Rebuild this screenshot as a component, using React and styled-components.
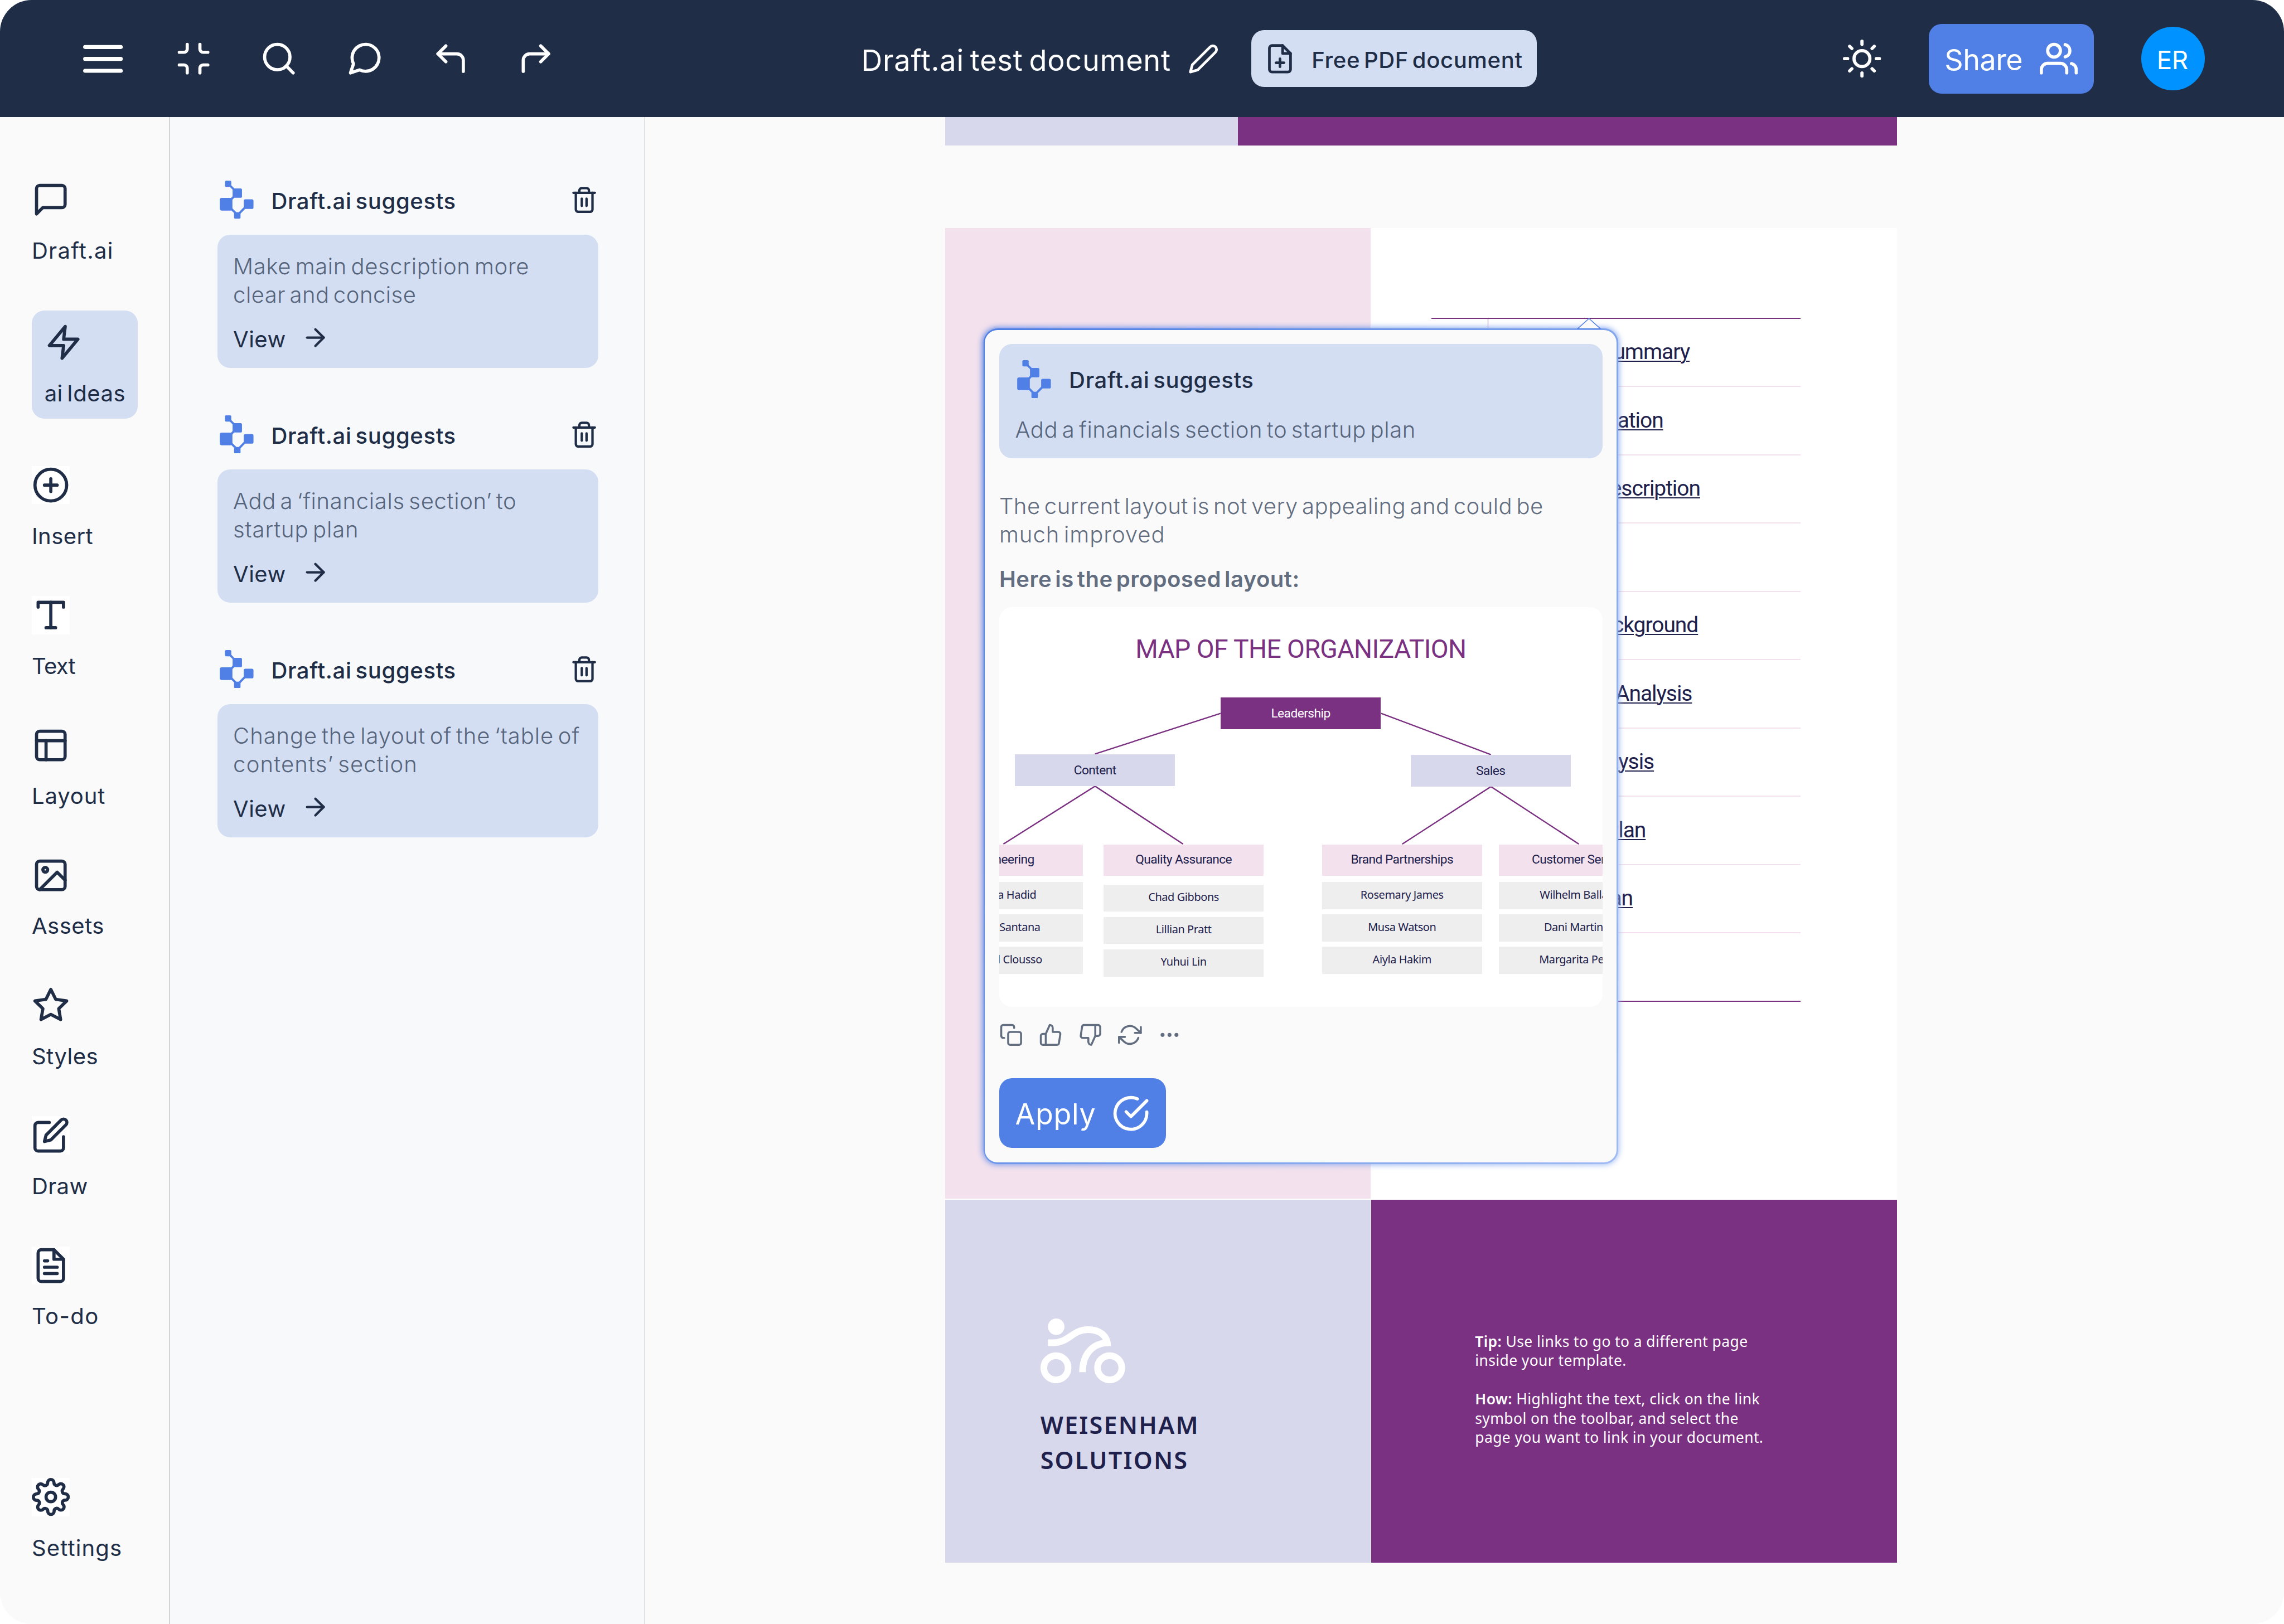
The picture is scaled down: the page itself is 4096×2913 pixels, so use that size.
import React from 'react';
import styled, { createGlobalStyle, css } from 'styled-components';
import {
    FiArrowRight, FiCheckCircle, FiCopy, FiCornerUpLeft, FiCornerUpRight, FiEdit, FiEdit2,
    FiFilePlus, FiFileText, FiImage, FiLayout, FiMenu, FiMessageCircle, FiMessageSquare,
    FiMinimize, FiMoreHorizontal, FiPlusCircle, FiRefreshCw, FiSearch, FiSettings, FiStar,
    FiSun, FiThumbsDown, FiThumbsUp, FiTrash2, FiType, FiUsers, FiZap,
} from 'react-icons/fi';

const navy = '#202d47';
const slate = '#56657c';
const gray = '#626d80';
const blue = '#507fe6';
const sky = '#d3def2';
const purple = '#7b3182';
const lavender = '#d7d8eb';
const pink = '#f3e1ed';
const ink = '#20204c';

// 1rem is one unit of the 1440 x 1024 layout
const GlobalStyle = createGlobalStyle`
    html {
        font-size: calc(100vw / 1440);
        background: #fff;
    }
    body {
        margin: 0;
    }
    * {
        box-sizing: border-box;
    }
    p {
        margin: 0;
    }
    svg {
        display: block;
        flex: none;
    }
`

const tools = [FiMinimize, FiSearch, FiMessageCircle, FiCornerUpLeft, FiCornerUpRight];

const navItems = [
    { label: 'Draft.ai', icon: FiMessageSquare, track: 0.031 },
    { label: 'ai Ideas', icon: FiZap, track: 0.0115, active: true },
    { label: 'Insert', icon: FiPlusCircle, track: 0.01, plate: true },
    { label: 'Text', icon: FiType, track: -0.018, plate: true },
    { label: 'Layout', icon: FiLayout, track: 0.021 },
    { label: 'Assets', icon: FiImage, track: 0.012 },
    { label: 'Styles', icon: FiStar, track: 0.011 },
    { label: 'Draw', icon: FiEdit, track: 0.008, plate: true },
    { label: 'To-do', icon: FiFileText, track: 0.035, plate: true },
    { label: 'Settings', icon: FiSettings, track: 0.028, plate: true, last: true },
];

const suggestions = [
    [['Make main description more', 0.015], ['clear and concise', 0.011]],
    [['Add a ‘financials section’ to', 0.016], ['startup plan', 0.02]],
    [['Change the layout of the ‘table of', 0.022], ['contents’ section', 0.0275]],
];

const contents = [
    { title: 'Executive Summary', width: 126.9 },
    { title: 'Presentation', width: 110.2 },
    { title: 'Business Description', width: 133.5 },
    {},
    { title: 'Business Background', width: 132.2 },
    { title: 'Market Analysis', width: 128.4 },
    { title: 'SWOT Analysis', width: 104.4 },
    { title: 'Marketing Plan', width: 99.2 },
    { title: 'Plan', width: 91 },
    {},
];

const teams = [
    { name: 'Engineering', x: -48.3, y: 173.2, people: ['Amelia Hadid', 'Carlos Santana', 'Mitchel Clousso'] },
    { name: 'Quality Assurance', x: 65.7, y: 174.8, people: ['Chad Gibbons', 'Lillian Pratt', 'Yuhui Lin'] },
    { name: 'Brand Partnerships', x: 203.4, y: 173.2, people: ['Rosemary James', 'Musa Watson', 'Aiyla Hakim'] },
    { name: 'Customer Service', x: 315, y: 173.2, people: ['Wilhelm Ballard', 'Dani Martinez', 'Margarita Perez'] },
];

const DraftLogo = () => (
    <LogoSvg viewBox="0 0 24 24">
        <path d="M8 3.2l2.6 2.6M10.4 10L8.6 11.9M8.6 17.6l3 3M17.2 17.1l-3.6 3.7" stroke={blue} strokeWidth="1.35" />
        <rect x="4.73" y="0" width="3.98" height="3.96" rx="0.8" />
        <rect x="9.53" y="4.88" width="5.92" height="5.92" rx="0.9" />
        <rect x="1.47" y="10.9" width="7.96" height="7.96" rx="1.2" />
        <rect x="16.57" y="11.8" width="6.13" height="6.04" rx="1" />
        <rect x="10.45" y="19.98" width="4.08" height="3.98" rx="0.7" />
    </LogoSvg>
);

const BikeLogo = () => (
    <BikeSvg viewBox="0 0 53.4 40.9">
        <g fill="none" stroke="#fff" strokeWidth="4.2">
            <circle cx="9.75" cy="31.1" r="7.65" />
            <circle cx="43.6" cy="31.1" r="7.65" />
            <path d="M4.7 15.3H8C18 15.3 20 7 30 7c7.5 0 12.3 4 12.3 10.4" />
            <path d="M26.5 33.8c0-11.5 6.5-18.4 16.5-18.5" />
        </g>
        <circle cx="9.9" cy="5.2" r="5.2" fill="#fff" />
    </BikeSvg>
);

const Suggestion = ({ lines }) => (
    <div>
        <SuggestionHead>
            <DraftLogo />
            <SuggestionTitle>Draft.ai suggests</SuggestionTitle>
            <FiTrash2 size="18rem" />
        </SuggestionHead>
        <SuggestionCard>
            <div>
                {lines.map(([text, track]) => (
                    <Line key={text} $color={slate} $track={track}>{text}</Line>
                ))}
            </div>
            <ViewLink>
                <Line $weight={400} $track={0.011}>View</Line>
                <FiArrowRight size="18rem" />
            </ViewLink>
        </SuggestionCard>
    </div>
);

const OrgChart = () => (
    <Chart>
        <ChartTitle>MAP OF THE ORGANIZATION</ChartTitle>
        <ChartLines viewBox="0 0 380 252">
            <path d="M139.5 67L60.4 92.6M240.8 67L310 93M2.6 149.4l57.8-36.5 55.5 36.5M254.1 149.4l55.9-36.2 55.4 36.2" />
        </ChartLines>
        <Node $x={139.5} $y={56.9} $bg={purple} $color="#fff">Leadership</Node>
        <Node $x={9.8} $y={92.7} $bg={lavender}>Content</Node>
        <Node $x={259.3} $y={93.2} $bg={lavender}>Sales</Node>
        {teams.map((team) => (
            <React.Fragment key={team.name}>
                <Node $x={team.x} $y={149.5} $bg={pink} $lift={1.2}>{team.name}</Node>
                {team.people.map((person, i) => (
                    <Person key={person} $x={team.x} $y={team.y + i * 20.4}>{person}</Person>
                ))}
            </React.Fragment>
        ))}
    </Chart>
);

const Popup = () => (
    <PopupFrame>
        <PopupArrow viewBox="0 0 15.2 7.2">
            <path d="M.4 6.9L7.6.4l7.2 6.5z" fill="#fafafa" stroke={blue} strokeWidth="0.5" />
        </PopupArrow>
        <PopupBody>
            <PopupCard>
                <SuggestionHead>
                    <DraftLogo />
                    <SuggestionTitle>Draft.ai suggests</SuggestionTitle>
                </SuggestionHead>
                <Line $color={slate} $track={0.0155}>Add a financials section to startup plan</Line>
            </PopupCard>
            <PopupText>
                <div>
                    <Line $color={gray} $track={0.0105}>The current layout is not very appealing and could be</Line>
                    <Line $color={gray} $track={0.023}>much improved</Line>
                </div>
                <Line $color={gray} $weight={600} $track={0.011}>Here is the proposed layout:</Line>
            </PopupText>
            <OrgChart />
            <Reactions>
                <FiCopy />
                <FiThumbsUp />
                <FiThumbsDown />
                <FiRefreshCw />
                <FiMoreHorizontal />
            </Reactions>
            <BlueButton $width={105} $track={0.012}>
                <span>Apply</span>
                <FiCheckCircle size="24rem" />
            </BlueButton>
        </PopupBody>
    </PopupFrame>
);

export default function App() {
    return (
        <>
            <GlobalStyle />
            <Screen>
                <Header>
                    <Tools>
                        <FiMenu size="30rem" />
                        {tools.map((Icon, i) => <Icon key={i} size="24rem" />)}
                    </Tools>
                    <DocTitle>
                        <h1>Draft.ai test document</h1>
                        <FiEdit2 size="20rem" />
                    </DocTitle>
                    <PdfButton>
                        <FiFilePlus size="20rem" />
                        <span>Free PDF document</span>
                    </PdfButton>
                    <Account>
                        <FiSun size="24rem" />
                        <BlueButton $width={104} $track={-0.01}>
                            <span>Share</span>
                            <FiUsers size="24rem" />
                        </BlueButton>
                        <Avatar>ER</Avatar>
                    </Account>
                </Header>
                <Main>
                    <Rail>
                        {navItems.map(({ label, icon: Icon, track, active, plate, last }) => (
                            <NavItem key={label} $active={active} $last={last}>
                                <IconPlate $plate={plate}><Icon size="24rem" /></IconPlate>
                                <Line $weight={400} $track={track}>{label}</Line>
                            </NavItem>
                        ))}
                    </Rail>
                    <Panel>
                        {suggestions.map((lines, i) => <Suggestion key={i} lines={lines} />)}
                    </Panel>
                    <Canvas>
                        <PreviousPage />
                        <DocPage>
                            <PinkCell />
                            <ContentsCell>
                                {contents.map(({ title, width }, i) => (
                                    <ContentsRow key={i} $first={i === 0} $last={i === contents.length - 1}>
                                        <NumberCell />
                                        {title && <ContentsLink $width={width}>{title}</ContentsLink>}
                                    </ContentsRow>
                                ))}
                            </ContentsCell>
                            <BrandCell>
                                <BikeLogo />
                                <BrandName>WEISENHAM<br />SOLUTIONS</BrandName>
                            </BrandCell>
                            <TipCell>
                                <p><b>Tip:</b> Use links to go to a different page<br />inside your template.</p>
                                <p><b>How:</b> Highlight the text, click on the link<br />symbol on the toolbar, and select the<br />page you want to link in your document.</p>
                            </TipCell>
                        </DocPage>
                        <Popup />
                    </Canvas>
                </Main>
            </Screen>
        </>
    );
}

const Screen = styled.div`
    display: flex;
    flex-direction: column;
    width: 100vw;
    height: 100vh;
    overflow: hidden;
    border-radius: 20rem;
    background: #fafafa;
    color: ${navy};
    font-family: Inter, "Open Sans", sans-serif;
    font-size: 14.1rem;
    line-height: 18rem;
    word-spacing: -0.11em;
    white-space: nowrap;
`

const Header = styled.header`
    flex: none;
    display: flex;
    align-items: center;
    height: 74rem;
    padding: 0 50rem;
    background: ${navy};
    color: #fff;
`

const Tools = styled.div`
    display: flex;
    align-items: center;
    gap: 30rem;
    margin-right: 193rem;
`

const DocTitle = styled.div`
    display: flex;
    align-items: center;
    justify-content: space-between;
    width: 226rem;
    margin-right: 20rem;

    h1 {
        margin: 0;
        padding-top: 1.7rem;
        font-size: 18.4rem;
        font-weight: 400;
        line-height: 24rem;
        letter-spacing: 0.0135em;
    }
`

const PdfButton = styled.button`
    display: flex;
    align-items: center;
    gap: 10rem;
    width: 180rem;
    height: 36rem;
    padding: 0 8rem;
    border: 0;
    border-radius: 8rem;
    background: ${sky};
    color: ${navy};
    font: inherit;
    font-weight: 500;
    letter-spacing: 0.0145em;
    word-spacing: inherit;

    span {
        padding-top: 1.7rem;
    }
`

const Account = styled.div`
    display: flex;
    align-items: center;
    gap: 30rem;
    margin-left: auto;
`

const BlueButton = styled.button`
    display: flex;
    align-items: center;
    justify-content: space-between;
    width: ${(props) => props.$width}rem;
    height: 44rem;
    padding: 0 10rem;
    border: 0;
    border-radius: 8rem;
    background: ${blue};
    color: #fff;
    font: inherit;
    font-size: 18.3rem;
    line-height: 24rem;
    letter-spacing: ${(props) => props.$track}em;

    span {
        padding-top: 1.7rem;
    }
`

const Avatar = styled.div`
    display: flex;
    align-items: center;
    justify-content: center;
    width: 40rem;
    height: 40rem;
    padding: 2rem 0.8rem 0 0;
    border-radius: 50%;
    background: #0093ff;
    font-size: 16.1rem;
    letter-spacing: -0.01em;
`

const Main = styled.div`
    flex: 1;
    display: flex;
    min-height: 0;
`

const Rail = styled.nav`
    flex: none;
    display: flex;
    flex-direction: column;
    align-items: flex-start;
    gap: 30rem;
    width: 107rem;
    padding: 40rem 20rem;
    border-right: 0.5rem solid #b3b3b3;
`

const NavItem = styled.a`
    display: flex;
    flex-direction: column;
    gap: 10rem;
    ${(props) => props.$last && css`
        margin-top: auto;
    `}
    ${(props) => props.$active && css`
        width: 67rem;
        padding: 8rem;
        border-radius: 8rem;
        background: ${sky};
    `}
`

const IconPlate = styled.span`
    width: 24rem;
    height: 24rem;
    background: ${(props) => (props.$plate ? '#fff' : 'none')};
`

/* one 18rem line; the padding drops the baseline inside it */
const Line = styled.p`
    height: 18rem;
    padding-top: 1rem;
    color: ${(props) => props.$color};
    font-weight: ${(props) => props.$weight || 360};
    letter-spacing: ${(props) => props.$track}em;
`

const Panel = styled.aside`
    flex: none;
    display: flex;
    flex-direction: column;
    gap: 30rem;
    width: 299.8rem;
    padding: 40rem 29.3rem 0 30rem;
    border-right: 0.5rem solid #b3b3b3;
    background: #f7f9fb;
`

const SuggestionHead = styled.div`
    display: flex;
    align-items: center;
    gap: 10rem;
    height: 24rem;
    margin-bottom: 10rem;
`

const SuggestionTitle = styled.h2`
    flex: 1;
    margin: 0;
    padding-top: 1.6rem;
    font-size: 14.1rem;
    font-weight: 550;
    letter-spacing: 0.015em;
`

const LogoSvg = styled.svg`
    width: 24rem;
    height: 24rem;
    fill: ${blue};
`

const SuggestionCard = styled.div`
    display: flex;
    flex-direction: column;
    gap: 10rem;
    height: 84rem;
    padding: 10rem;
    border-radius: 8rem;
    background: ${sky};
`

const ViewLink = styled.a`
    display: flex;
    gap: 10rem;

    p {
        width: 33rem;
    }
`

const Canvas = styled.main`
    position: relative;
    flex: 1;
    padding-left: 189rem;
    overflow: hidden;
`

const PreviousPage = styled.div`
    width: 600.2rem;
    height: 17.7rem;
    margin-bottom: 52rem;
    background: linear-gradient(to right, ${lavender} 184.5rem, ${purple} 184.5rem);
`

const DocPage = styled.div`
    display: grid;
    grid-template-columns: 268.5rem 1fr;
    grid-template-rows: 612.2rem 228.7rem;
    gap: 0.7rem 0.3rem;
    width: 600.2rem;
    background: #fff;
`

const PinkCell = styled.div`
    background: ${pink};
`

const ContentsCell = styled.div`
    padding: 56.6rem 60.9rem 0 37.8rem;
`

const ContentsRow = styled.div`
    display: flex;
    align-items: center;
    height: ${(props) => (props.$last ? 43.9 : 43.07)}rem;
    border-top: 0.75rem solid ${(props) => (props.$first ? purple : pink)};
    border-bottom: ${(props) => (props.$last ? `0.75rem solid ${purple}` : 'none')};
`

const NumberCell = styled.div`
    width: 36rem;
    height: 100%;
    border-right: 0.5rem solid #5a2a6c;
`

const ContentsLink = styled.a`
    width: ${(props) => props.$width}rem;
    color: ${ink};
    font-family: Roboto, sans-serif;
    font-size: 13.7rem;
    letter-spacing: -0.027em;
    word-spacing: 0;
    text-align: right;
    text-decoration: underline;
    text-decoration-thickness: 0.8rem;
    text-underline-offset: 0.9rem;
`

const BrandCell = styled.div`
    padding: 74.7rem 0 0 60.1rem;
    background: ${lavender};
`

const BikeSvg = styled.svg`
    width: 53.4rem;
    height: 40.9rem;
`

const BrandName = styled.p`
    margin-top: 15.6rem;
    color: ${ink};
    font-family: "Noto Sans", sans-serif;
    font-size: 15.2rem;
    font-weight: 600;
    line-height: 22rem;
    letter-spacing: 0.051em;
`

const TipCell = styled.div`
    display: flex;
    flex-direction: column;
    gap: 12.12rem;
    padding: 83.3rem 0 0 65.4rem;
    background: ${purple};
    color: #fff;
    font-family: "Noto Sans", sans-serif;
    font-size: 9.3rem;
    line-height: 12.12rem;
    letter-spacing: 0.0155em;
    word-spacing: 0;

    b {
        font-weight: 600;
    }
`

const PopupFrame = styled.section`
    position: absolute;
    top: 133rem;
    left: 213.2rem;
    isolation: isolate;
    width: 400.3rem;
    height: 527rem;
    padding: 1rem;
    border-radius: 9rem;
    background: linear-gradient(115deg, #4c7ee4, #a0bbf3);

    &::before {
        content: '';
        position: absolute;
        inset: -0.4rem;
        z-index: -1;
        border-radius: 9.4rem;
        background: inherit;
        filter: blur(1.8rem);
    }
`

const PopupArrow = styled.svg`
    position: absolute;
    top: -6.5rem;
    left: 374.4rem;
    width: 15.2rem;
    height: 7.2rem;
`

const PopupBody = styled.div`
    height: 100%;
    padding: 9rem;
    border-radius: 8rem;
    background: #fafafa;
`

const PopupCard = styled.div`
    height: 72rem;
    padding: 10rem;
    border-radius: 8rem;
    background: ${sky};
`

const PopupText = styled.div`
    display: flex;
    flex-direction: column;
    gap: 10rem;
    margin: 20rem 0 10rem;
`

const Chart = styled.div`
    position: relative;
    height: 252rem;
    overflow: hidden;
    border-radius: 8rem;
    background: #fff;
    color: ${ink};
    font-family: Roboto, sans-serif;
    word-spacing: 0;
`

const ChartTitle = styled.h3`
    margin: 0;
    padding-top: 14.4rem;
    color: ${purple};
    font-size: 16.3rem;
    font-weight: 400;
    line-height: 24rem;
    letter-spacing: -0.013em;
    text-align: center;
`

const ChartLines = styled.svg`
    position: absolute;
    inset: 0;
    width: 380rem;
    height: 252rem;
    fill: none;
    stroke: ${purple};
    stroke-width: 0.85;
`

const Node = styled.div`
    position: absolute;
    top: ${(props) => props.$y}rem;
    left: ${(props) => props.$x}rem;
    display: flex;
    align-items: center;
    justify-content: center;
    width: 101.1rem;
    height: 19.9rem;
    padding-bottom: ${(props) => props.$lift || 0}rem;
    background: ${(props) => props.$bg};
    color: ${(props) => props.$color};
    font-size: 8rem;
    letter-spacing: -0.025em;
`

const Person = styled(Node)`
    height: 17.2rem;
    padding-bottom: 1.4rem;
    background: #eee;
    font-family: "Noto Sans", sans-serif;
    font-size: 7rem;
    letter-spacing: -0.02em;
`

const Reactions = styled.div`
    display: flex;
    gap: 10rem;
    margin: 10rem 0 20rem;
    color: ${gray};

    svg {
        width: 15rem;
        height: 15rem;
    }
`
